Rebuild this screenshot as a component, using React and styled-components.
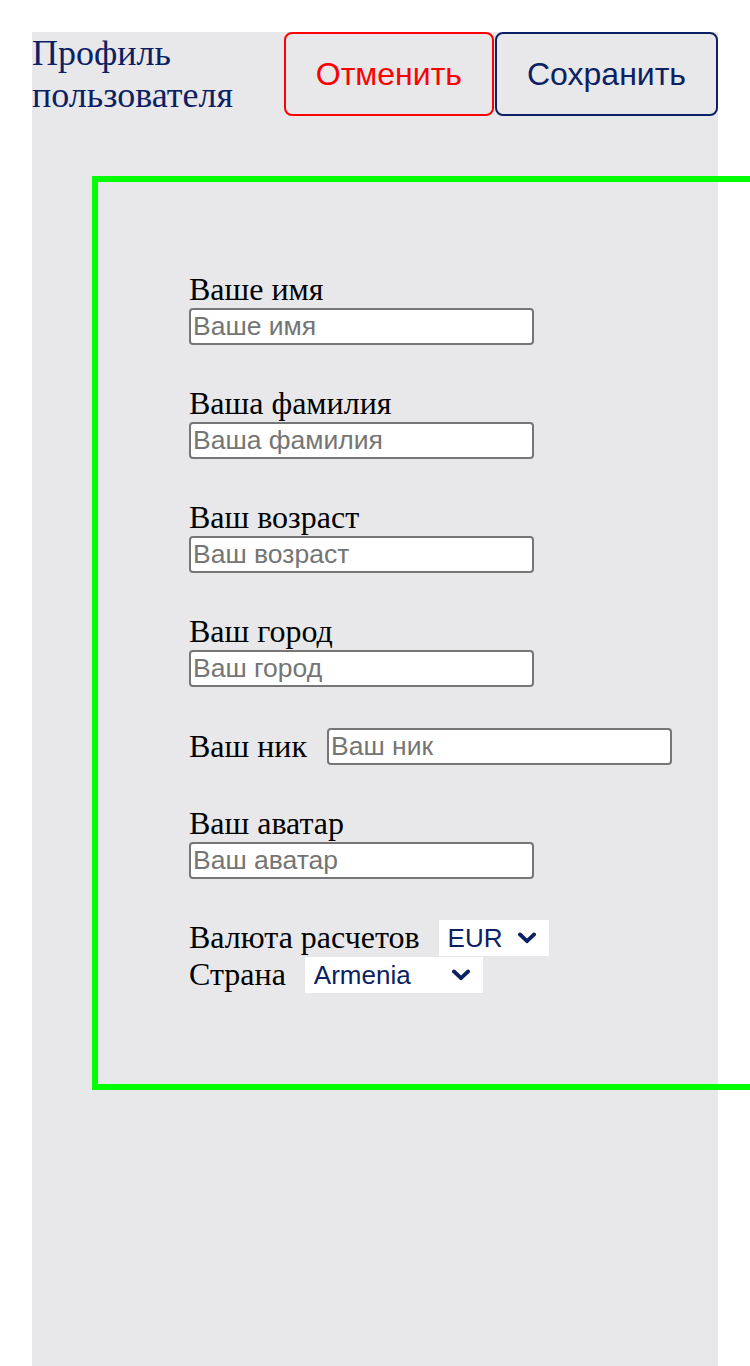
import React from "react";
import styled, { createGlobalStyle } from "styled-components";

const NAVY = "#0b2163";

const GlobalStyle = createGlobalStyle`
  html, body {
    margin: 0;
    padding: 0;
  }
  html {
    overflow-x: hidden;
  }
  body {
    padding: 32px 32px 0;
    font-family: "Liberation Serif", "Times New Roman", serif;
    background: #ffffff;
    overflow-x: hidden;
  }
  * {
    box-sizing: border-box;
  }
`;

const Panel = styled.div`
  background: #e8e8ea;
  min-height: calc(100vh - 32px);
`;

const Header = styled.header`
  display: flex;
  justify-content: space-between;
  align-items: flex-start;
`;

const Title = styled.h1`
  margin: 0;
  font-family: "Liberation Serif", "Times New Roman", serif;
  font-weight: normal;
  font-size: 36px;
  line-height: normal;
  color: ${NAVY};
  flex: 1 1 auto;
  min-width: 0;
`;

const Actions = styled.div`
  display: flex;
  gap: 1px;
  flex-shrink: 0;
`;

const ActionButton = styled.button`
  height: 84px;
  padding: 0 30px;
  border: 2px solid ${(p) => p.$color};
  border-radius: 8px;
  background: transparent;
  color: ${(p) => p.$color};
  font-family: "Liberation Sans", Arial, sans-serif;
  font-size: 32px;
  cursor: pointer;
`;

const FormFrame = styled.form`
  margin: 60px 0 0 60px;
  width: 100%;
  border: 6px solid #00ff00;
  padding: 89px 0 91px 91px;
  display: flex;
  flex-direction: column;
  gap: 40px;
`;

const Field = styled.div`
  display: flex;
  flex-direction: column;
  align-items: flex-start;
`;

const InlineField = styled.div`
  display: flex;
  align-items: center;
  gap: 20px;
  height: 38px;
`;

const Label = styled.label`
  font-family: "Liberation Serif", "Times New Roman", serif;
  font-size: 32px;
  line-height: normal;
  color: #000000;
`;

const TextInput = styled.input`
  width: 345px;
  height: 37px;
  padding: 0 2px;
  border: 2px solid #767676;
  border-radius: 4px;
  background: #ffffff;
  font-family: "Liberation Sans", Arial, sans-serif;
  font-size: 26.5px;
  color: #000000;
  outline: none;

  &::placeholder {
    color: #757575;
  }
`;

const SelectGroup = styled.div`
  display: flex;
  flex-direction: column;
`;

const SelectRow = styled.div`
  display: flex;
  align-items: center;
  gap: 19px;
`;

const SelectWrap = styled.div`
  position: relative;
  display: inline-flex;
  width: ${(p) => p.$width}px;
`;

const Select = styled.select`
  appearance: none;
  -webkit-appearance: none;
  width: 100%;
  height: 36px;
  padding: 0 0 0 9px;
  border: none;
  border-radius: 0;
  background: #ffffff;
  color: ${NAVY};
  font-family: "Liberation Sans", Arial, sans-serif;
  font-size: 26px;
  outline: none;
`;

const Chevron = styled.svg`
  position: absolute;
  right: 13px;
  top: 50%;
  transform: translateY(-50%);
  pointer-events: none;
`;

const ChevronIcon = () => (
  <Chevron width="18" height="11" viewBox="0 0 18 11">
    <path d="M2 2 L9 8.6 L16 2" fill="none" stroke={NAVY} strokeWidth="3.8" strokeLinecap="square" strokeLinejoin="miter" />
  </Chevron>
);

const fields = ["Ваше имя", "Ваша фамилия", "Ваш возраст", "Ваш город"];

export default function App() {
  return (
    <>
      <GlobalStyle />
      <Panel>
        <Header>
          <Title>Профиль пользователя</Title>
          <Actions>
            <ActionButton type="button" $color="#ff0000">Отменить</ActionButton>
            <ActionButton type="button" $color={NAVY}>Сохранить</ActionButton>
          </Actions>
        </Header>
        <FormFrame onSubmit={(e) => e.preventDefault()}>
          {fields.map((f) => (
            <Field key={f}>
              <Label>{f}</Label>
              <TextInput placeholder={f} />
            </Field>
          ))}
          <InlineField>
            <Label>Ваш ник</Label>
            <TextInput placeholder="Ваш ник" />
          </InlineField>
          <Field>
            <Label>Ваш аватар</Label>
            <TextInput placeholder="Ваш аватар" />
          </Field>
          <SelectGroup>
            <SelectRow>
              <Label>Валюта расчетов</Label>
              <SelectWrap $width={110}>
                <Select defaultValue="EUR">
                  <option>EUR</option>
                  <option>USD</option>
                  <option>RUB</option>
                </Select>
                <ChevronIcon />
              </SelectWrap>
            </SelectRow>
            <SelectRow>
              <Label>Страна</Label>
              <SelectWrap $width={178}>
                <Select defaultValue="Armenia">
                  <option>Armenia</option>
                  <option>Russia</option>
                  <option>Georgia</option>
                </Select>
                <ChevronIcon />
              </SelectWrap>
            </SelectRow>
          </SelectGroup>
        </FormFrame>
      </Panel>
    </>
  );
}
